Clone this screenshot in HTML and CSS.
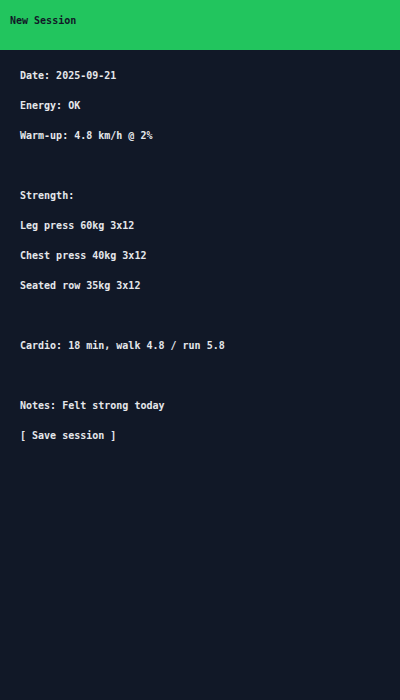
FILE: index.html
```html
<!DOCTYPE html>
<html lang="en">
<head>
<meta charset="utf-8">
<title>New Session</title>
<link rel="stylesheet" href="styles.css">
</head>
<body>
<header class="topbar">New Session</header>
<main class="content">
  <div class="row">Date: 2025-09-21</div>
  <div class="row">Energy: OK</div>
  <div class="row">Warm-up: 4.8 km/h @ 2%</div>
  <div class="row"></div>
  <div class="row">Strength:</div>
  <div class="row">Leg press 60kg 3x12</div>
  <div class="row">Chest press 40kg 3x12</div>
  <div class="row">Seated row 35kg 3x12</div>
  <div class="row"></div>
  <div class="row">Cardio: 18 min, walk 4.8 / run 5.8</div>
  <div class="row"></div>
  <div class="row">Notes: Felt strong today</div>
  <div class="row">[ Save session ]</div>
</main>
</body>
</html>
```
FILE: styles.css
```css
html, body {
  margin: 0;
  padding: 0;
}
body {
  background: #111827;
  min-height: 700px;
  font-family: "DejaVu Sans Mono", "Liberation Mono", monospace;
  font-size: 10px;
  font-weight: bold;
  color: #e5e7eb;
}
.topbar {
  box-sizing: border-box;
  height: 50px;
  padding: 11px 10px 9px;
  line-height: 20px;
  background: #22c55e;
  color: #111827;
}
.content {
  display: flex;
  flex-direction: column;
  padding: 11px 20px 10px;
}
.row {
  height: 30px;
  line-height: 30px;
  white-space: pre;
}
```
